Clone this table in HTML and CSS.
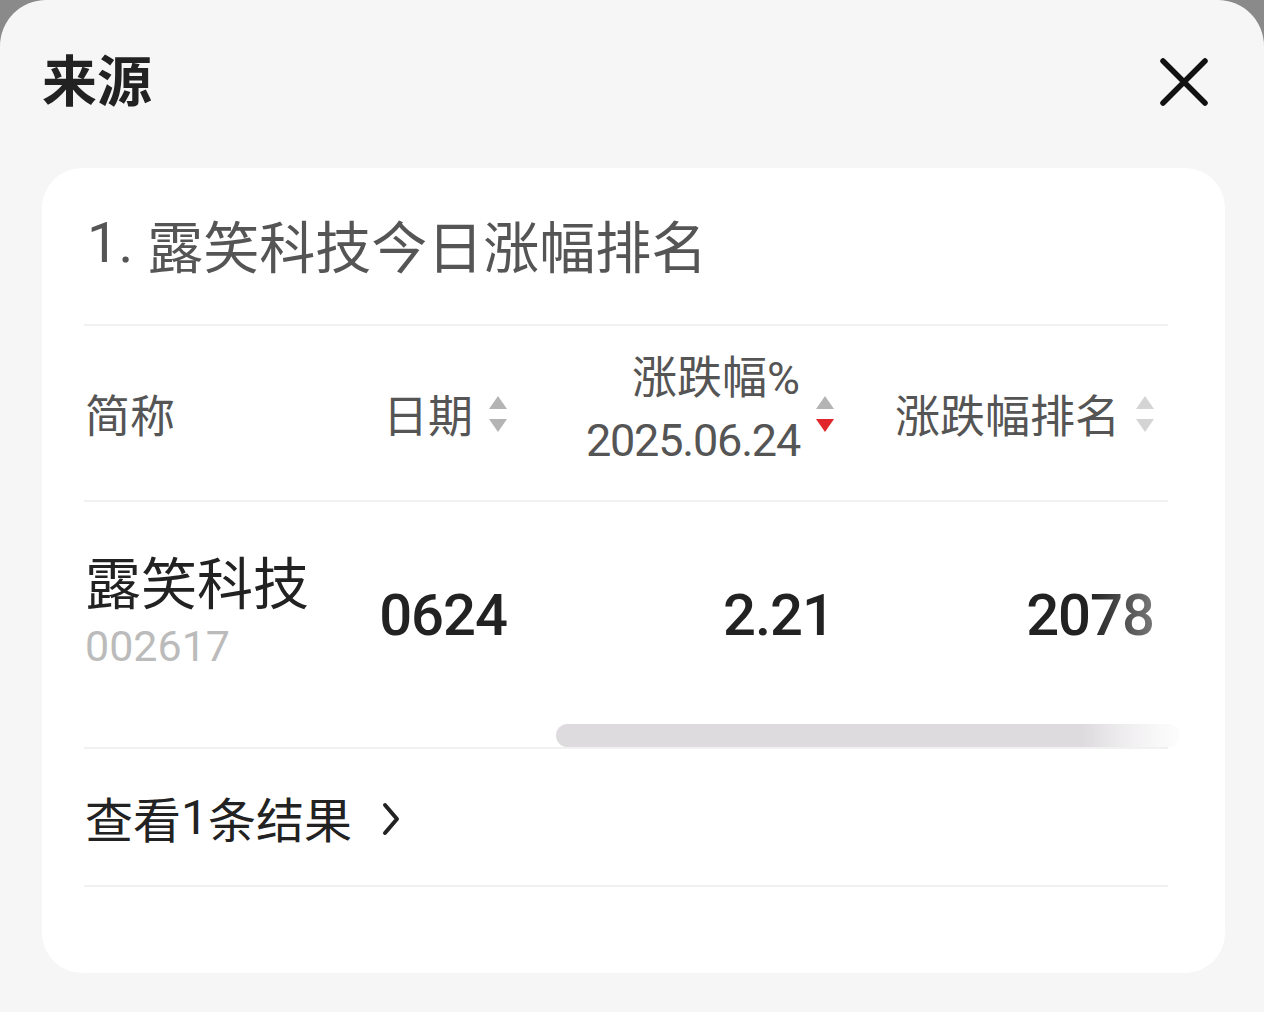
FILE: index.html
```html
<!DOCTYPE html>
<html lang="zh-CN">
<head>
    <meta charset="UTF-8">
    <meta name="viewport" content="width=device-width, initial-scale=1.0">
    <title>来源</title>
    <link rel="stylesheet" href="styles.css">
</head>
<body>
    <div class="sheet">
        <div class="sheet-head">
            <h1 class="sheet-title">来源</h1>
            <button class="close-btn" aria-label="关闭">
                <svg width="50" height="50" viewBox="0 0 50 50">
                    <path d="M4 4 L46 46 M46 4 L4 46" stroke="#111" stroke-width="5.5" stroke-linecap="round" fill="none"/>
                </svg>
            </button>
        </div>

        <div class="card">
            <div class="card-title"><span class="num">1.</span> 露笑科技今日涨幅排名</div>

            <div class="table-wrap">
                <div class="table-row table-head">
                    <div class="cell cell-name">简称</div>
                    <div class="cell cell-right">
                        <span class="head-label">日期</span>
                        <span class="sort"><i class="up"></i><i class="down"></i></span>
                    </div>
                    <div class="cell cell-right">
                        <span class="head-label two-line">涨跌幅%<br><span class="num date">2025.06.24</span></span>
                        <span class="sort"><i class="up"></i><i class="down active"></i></span>
                    </div>
                    <div class="cell cell-right">
                        <span class="head-label">涨跌幅排名</span>
                        <span class="sort faded"><i class="up"></i><i class="down"></i></span>
                    </div>
                </div>

                <div class="table-row table-body">
                    <div class="cell cell-name">
                        <div class="stock-name">露笑科技</div>
                        <div class="stock-code num">002617</div>
                    </div>
                    <div class="cell cell-right value num">0624</div>
                    <div class="cell cell-right value num">2.21</div>
                    <div class="cell cell-right value num">2078</div>
                </div>

                <div class="scrollbar"></div>
                <div class="fade"></div>
            </div>

            <a class="more-link" href="#">查看<span class="num">1</span>条结果
                <svg width="18" height="34" viewBox="0 0 18 34">
                    <path d="M3 3 L15 17 L3 31" stroke="#222" stroke-width="4" stroke-linecap="round" stroke-linejoin="round" fill="none"/>
                </svg>
            </a>
        </div>
    </div>
</body>
</html>
```

FILE: styles.css
```css
/* Основа */
body {
    margin: 0;
    padding: 0;
    background-color: #8a8a8a;
    font-family: Roboto, "Noto Sans CJK SC", sans-serif;
    color: #222;
}
.num {
    font-family: Roboto, "Noto Sans CJK SC", sans-serif;
}

/* Лист */
.sheet {
    background-color: #f6f6f6;
    border-radius: 46px 46px 0 0;
    min-height: 1012px;
    box-sizing: border-box;
    padding: 0 39px 0 42px;
}
.sheet-head {
    display: flex;
    justify-content: space-between;
    align-items: center;
    height: 168px;
    padding-bottom: 14px;
    box-sizing: border-box;
}
.sheet-title {
    margin: 0;
    font-family: "Noto Sans CJK SC", sans-serif;
    font-size: 55px;
    font-weight: 700;
    color: #222;
}
.close-btn {
    background: none;
    border: none;
    padding: 0;
    margin-right: 16px;
    margin-top: 10px;
    cursor: pointer;
    display: flex;
}

/* Карточка */
.card {
    background-color: #fff;
    border-radius: 40px;
    padding: 0 57px 86px 42px;
}
.card-title {
    height: 158px;
    display: flex;
    align-items: center;
    padding-left: 3px;
    padding-bottom: 6px;
    box-sizing: border-box;
    font-size: 56px;
    color: #555;
    border-bottom: 2px solid #f1f1f1;
    white-space: pre;
}

/* Таблица */
.table-wrap {
    position: relative;
}
.table-row {
    display: grid;
    grid-template-columns: 240px 183px 327px 320px;
}
.table-head {
    height: 174px;
    align-items: center;
    border-bottom: 2px solid #f1f1f1;
    color: #555;
    font-size: 45px;
}
.cell {
    display: flex;
    align-items: center;
}
.cell-name {
    padding-left: 1px;
    flex-direction: column;
    align-items: flex-start;
}
.cell-right {
    justify-content: flex-end;
}
.head-label {
    white-space: nowrap;
}
.two-line {
    text-align: right;
    line-height: 62px;
    margin-top: -6px;
}
.date {
    letter-spacing: -1.2px;
}
.sort {
    display: flex;
    flex-direction: column;
    gap: 10px;
    margin-left: 16px;
    margin-top: 2px;
}
.sort i {
    display: block;
    width: 0;
    height: 0;
    border-left: 9px solid transparent;
    border-right: 9px solid transparent;
}
.sort .up {
    border-bottom: 13px solid #b4b4b4;
}
.sort .down {
    border-top: 13px solid #b4b4b4;
}
.sort .down.active {
    border-top-color: #e0262b;
}
.sort.faded .up {
    border-bottom-color: #d4d4d4;
}
.sort.faded .down {
    border-top-color: #d4d4d4;
}

.table-body {
    height: 222px;
    align-items: center;
}
.stock-name {
    font-family: "Noto Sans CJK SC", sans-serif;
    font-size: 56px;
    line-height: 70px;
    color: #222;
    margin-top: -4px;
}
.stock-code {
    font-size: 43px;
    line-height: 62px;
    color: #bbb;
}
.value {
    font-size: 58px;
    font-weight: 500;
    letter-spacing: -1px;
    color: #222;
    padding-top: 4px;
}
.scrollbar {
    height: 23px;
    margin-left: 472px;
    margin-right: -12px;
    border-radius: 12px;
    background: linear-gradient(to right, #dedbde 84%, rgba(222, 219, 222, 0.15));
}
.fade {
    position: absolute;
    top: 176px;
    right: -12px;
    width: 90px;
    bottom: 0;
    background: linear-gradient(to right, rgba(255, 255, 255, 0), rgba(255, 255, 255, 0.55));
}

/* Ссылка */
.more-link {
    display: flex;
    align-items: center;
    height: 136px;
    padding-left: 1px;
    border-top: 2px solid #f1f1f1;
    border-bottom: 2px solid #f1f1f1;
    font-size: 48px;
    color: #222;
    text-decoration: none;
}
.more-link svg {
    margin-left: 30px;
    margin-top: 4px;
}
```
